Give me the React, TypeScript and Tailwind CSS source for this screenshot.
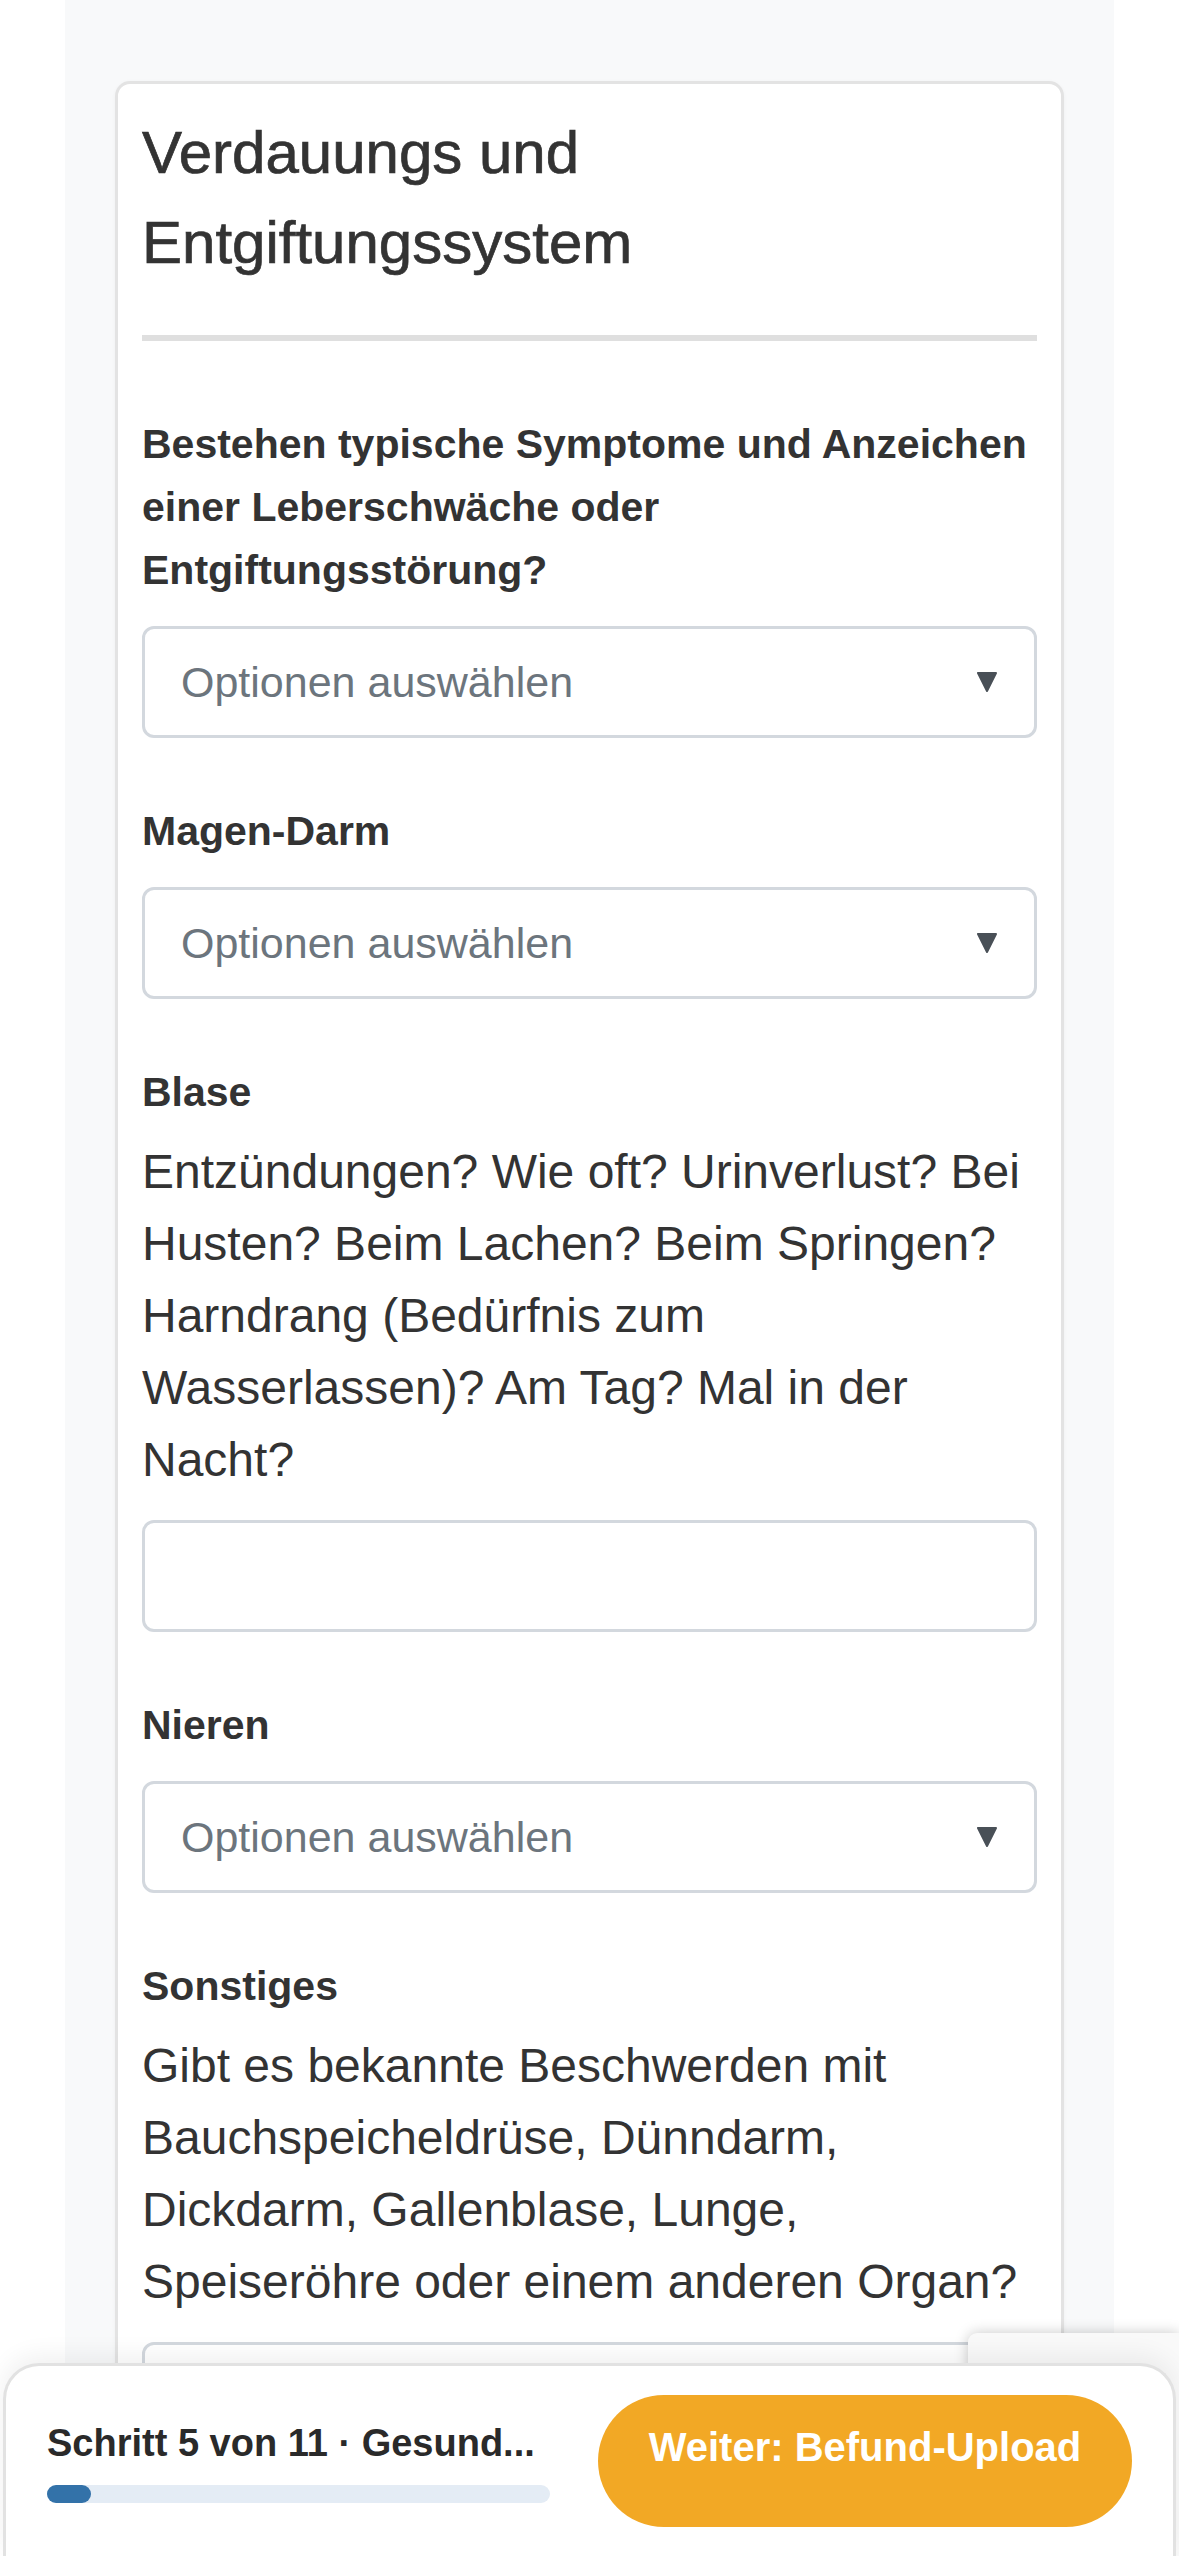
import React from "react";

function Caret() {
  return (
    <svg width="20" height="20" viewBox="0 0 20 20" className="shrink-0">
      <polygon points="1,1 19,1 10,19" fill="#495057" stroke="#495057" strokeWidth="2" strokeLinejoin="round" />
    </svg>
  );
}

function SelectBox() {
  return (
    <div className="mt-[24px] flex h-[112px] items-center justify-between rounded-[12px] border-[3px] border-[#d3d8de] bg-white pl-[36px] pr-[37px]">
      <span className="text-[43px] leading-[60px] text-[#6c757d]">Optionen auswählen</span>
      <Caret />
    </div>
  );
}

function TextBox() {
  return <div className="mt-[24px] h-[112px] rounded-[12px] border-[3px] border-[#d3d8de] bg-white" />;
}

function Label({ children }: { children: React.ReactNode }) {
  return <div className="text-[41px] font-bold leading-[63px] text-[#333]">{children}</div>;
}

function Hint({ children }: { children: React.ReactNode }) {
  return <p className="mt-[12px] text-[48px] leading-[72px] text-[#333]">{children}</p>;
}

export default function App() {
  return (
    <div className="relative h-[2556px] w-[1179px] overflow-hidden bg-white font-['Liberation_Sans',Arial,sans-serif]">
      {/* page column */}
      <div className="mx-[65px] min-h-[2556px] bg-[#f8f9fa] px-[50px] pt-[81px]">
        <div className="rounded-[15px] border-[3px] border-[#e3e3e3] bg-white px-[24px] pb-[200px] pt-[24px] shadow-[0_1px_4px_rgba(0,0,0,0.04)]">
          <h2 className="border-b-[6px] border-[#dfdfdf] pb-[47px] text-[60px] leading-[90px] text-[#333] [-webkit-text-stroke:0.7px_#333]">
            Verdauungs und Entgiftungssystem
          </h2>

          <div className="mt-[72px]">
            <Label>Bestehen typische Symptome und Anzeichen einer Leberschwäche oder Entgiftungsstörung?</Label>
            <SelectBox />
          </div>

          <div className="mt-[62px]">
            <Label>Magen-Darm</Label>
            <SelectBox />
          </div>

          <div className="mt-[62px]">
            <Label>Blase</Label>
            <Hint>
              Entzündungen? Wie oft? Urinverlust? Bei Husten? Beim Lachen? Beim Springen? Harndrang (Bedürfnis zum
              Wasserlassen)? Am Tag? Mal in der Nacht?
            </Hint>
            <TextBox />
          </div>

          <div className="mt-[62px]">
            <Label>Nieren</Label>
            <SelectBox />
          </div>

          <div className="mt-[62px]">
            <Label>Sonstiges</Label>
            <Hint>
              Gibt es bekannte Beschwerden mit Bauchspeicheldrüse, Dünndarm, Dickdarm, Gallenblase, Lunge, Speiseröhre
              oder einem anderen Organ?
            </Hint>
            <TextBox />
          </div>
        </div>
      </div>

      {/* captcha badge peeking in from the right edge */}
      <div className="absolute right-0 top-[2333px] z-10 h-[223px] w-[211px] rounded-tl-[9px] bg-[#f9f9f9] shadow-[0_0_14px_rgba(0,0,0,0.22)]">
        <div className="ml-[55px] mt-[34px] h-[64px] w-[64px] rounded-full bg-[#f0f1f4]" />
      </div>

      {/* sticky step bar */}
      <div className="absolute bottom-0 left-[3px] right-[3px] z-20 flex h-[193px] items-start justify-between rounded-t-[36px] border-x-[3px] border-t-[3px] border-[#e2e2e2] bg-white pl-[41px] pr-[41px] pt-[29px] shadow-[0_-8px_24px_rgba(0,0,0,0.06)]">
        <div className="flex h-[132px] w-[503px] flex-col justify-center">
          <div className="whitespace-nowrap text-[38px] font-bold leading-[48px] text-[#2a2a2a]">
            Schritt 5 von 11 · Gesund...
          </div>
          <div className="mt-[18px] h-[18px] w-full rounded-full bg-[#e4ecf5]">
            <div className="h-full w-[44px] rounded-full bg-[#3372a9]" />
          </div>
        </div>
        <button className="flex h-[132px] w-[534px] items-center justify-center rounded-full bg-[#f2a825] pb-[28px] text-[40px] font-bold text-white">
          Weiter: Befund-Upload
        </button>
      </div>
    </div>
  );
}
